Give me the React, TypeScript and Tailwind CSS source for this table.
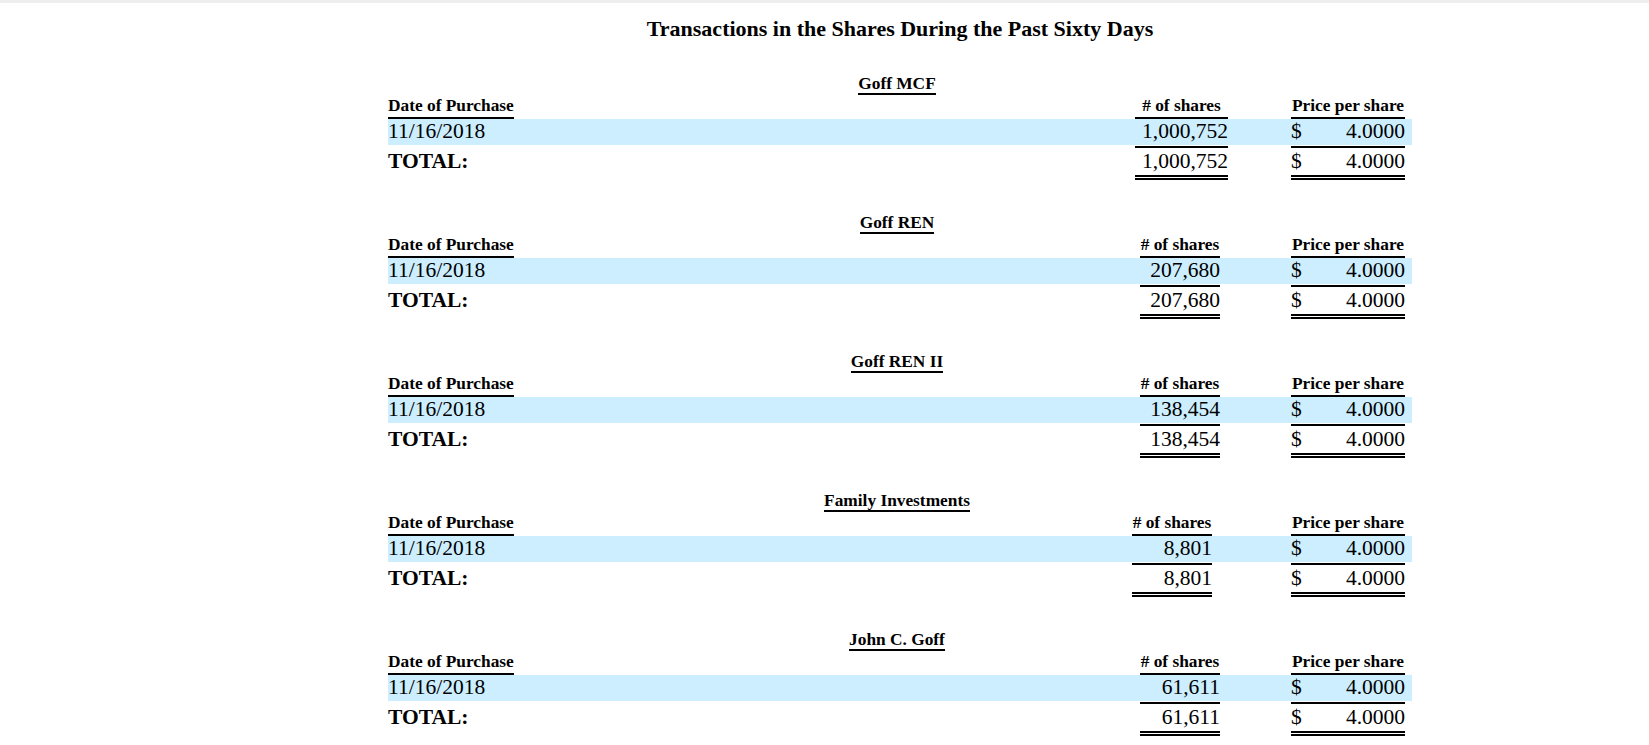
import React from "react";

type Section = { name: string; shares: string; cols: string };

const sections: Section[] = [
  { name: "Goff MCF", shares: "1,000,752", cols: "grid-cols-[747px_93px_63px_114px_7px]" },
  { name: "Goff REN", shares: "207,680", cols: "grid-cols-[752px_80px_71px_114px_7px]" },
  { name: "Goff REN II", shares: "138,454", cols: "grid-cols-[752px_80px_71px_114px_7px]" },
  { name: "Family Investments", shares: "8,801", cols: "grid-cols-[744px_80px_79px_114px_7px]" },
  { name: "John C. Goff", shares: "61,611", cols: "grid-cols-[752px_80px_71px_114px_7px]" },
];

function SectionTable({ s }: { s: Section }) {
  return (
    <div className="flex flex-col">
      <div className="flex justify-center pr-[6px]">
        <span className="border-b-2 border-black text-[17.33px] font-bold leading-[18px]">{s.name}</span>
      </div>
      <div className={`grid ${s.cols} text-[17.33px] font-bold`}>
        <div className="flex items-end">
          <span className="border-b-2 border-black pt-[1px] pb-[1px] leading-[20px]">Date of Purchase</span>
        </div>
        <div className="border-b-2 border-black pt-[1px] pb-[1px] text-center leading-[20px]"># of shares</div>
        <div />
        <div className="border-b-2 border-black pt-[1px] pb-[1px] text-center leading-[20px]">Price per share</div>
        <div />
      </div>
      <div className={`grid ${s.cols} h-[26px] bg-[#cceeff] text-[21.5px] leading-[24px]`}>
        <div>11/16/2018</div>
        <div className="text-right">{s.shares}</div>
        <div />
        <div className="flex justify-between">
          <span>$</span>
          <span>4.0000</span>
        </div>
        <div />
      </div>
      <div className={`mt-[1px] grid ${s.cols} text-[21.5px] leading-[24px]`}>
        <div className="pt-[3px] font-bold">TOTAL:</div>
        <div className="flex flex-col">
          <div className="border-t-2 border-black pt-[1px] pb-[2px] text-right">{s.shares}</div>
          <div className="h-[5px] border-y-2 border-black" />
        </div>
        <div />
        <div className="flex flex-col">
          <div className="flex justify-between border-t-2 border-black pt-[1px] pb-[2px]">
            <span>$</span>
            <span>4.0000</span>
          </div>
          <div className="h-[5px] border-y-2 border-black" />
        </div>
        <div />
      </div>
    </div>
  );
}

export default function App() {
  return (
    <div className="min-h-screen bg-white font-['Liberation_Serif',serif] text-black">
      <div className="h-[3px] w-full bg-[#eeeeee]" />
      <div className="ml-[388px] flex w-[1024px] flex-col gap-[34px] pt-[14px]">
        <div className="text-center text-[22px] font-bold leading-[24px]">
          Transactions in the Shares During the Past Sixty Days
        </div>
        <div className="flex flex-col gap-[34px]">
          {sections.map((s) => (
            <SectionTable key={s.name} s={s} />
          ))}
        </div>
      </div>
    </div>
  );
}
